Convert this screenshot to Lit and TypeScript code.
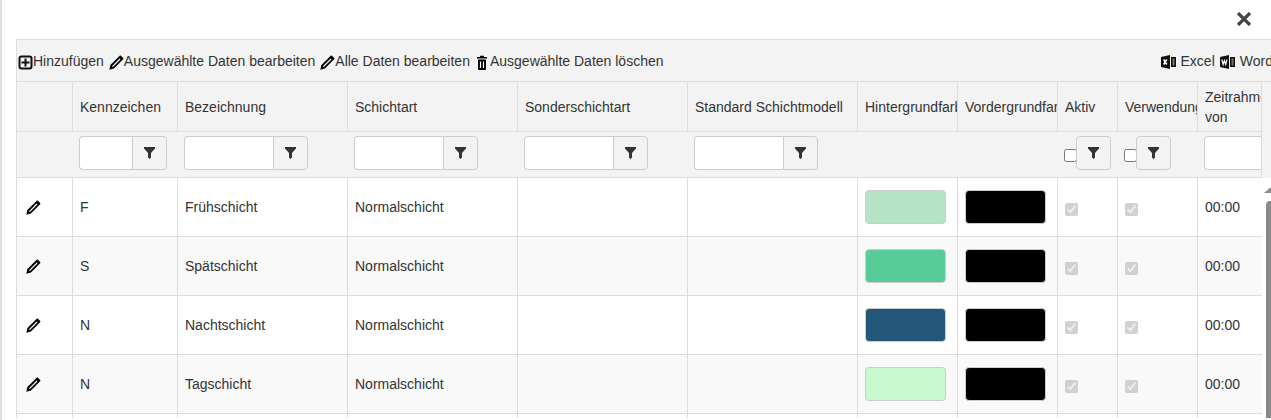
import { LitElement, css, html, svg } from "lit";
import { customElement } from "lit/decorators.js";

const columns = [56, 105, 170, 170, 170, 170, 100, 100, 60, 80, 140, 65];

const shifts = [
  { code: "F", name: "Frühschicht", bg: "#b7e4c7" },
  { code: "S", name: "Spätschicht", bg: "#57cc99" },
  { code: "N", name: "Nachtschicht", bg: "#22577a" },
  { code: "N", name: "Tagschicht", bg: "#c7f9cc" },
  { code: "", name: "", bg: "" },
];

const pencilPath = svg`<path d="M.3 13.7l1-4.300L10 .8c.3-.3.8-.3 1.100 0l2.100 2.100c.3.3.3.8 0 1.100L4.600 12.700z" fill="#000"/><path d="M3.200 10.800L10.300 3.700" stroke="#fff" stroke-width="1.100"/>`;

const icons = {
  plus: html`<svg class="ic" width="15" height="15" viewBox="0 0 15 15"><rect x="1.500" y="1.500" width="12" height="12" rx="2" fill="none" stroke="#111" stroke-width="2"/><path d="M7.500 3.500v8M3.500 7.500h8" stroke="#111" stroke-width="2"/></svg>`,
  pencil: html`<svg class="ic" width="15" height="15" viewBox="0 0 14 14">${pencilPath}</svg>`,
  trash: html`<svg class="ic" width="15" height="15" viewBox="0 0 15 15"><path d="M2 2h10v1.500H2zM5 .8h4V2H5z" fill="#000"/><path d="M3 4.500h8V14a1 1 0 0 1-1 1H4a1 1 0 0 1-1-1z" fill="#000"/><path d="M5.500 6.500v6.500M8.500 6.500v6.500" stroke="#fff" stroke-width="1.200"/></svg>`,
  excel: html`<svg class="ic" width="15" height="14" viewBox="0 0 15 14"><path d="M0 2l9-2v14l-9-2z" fill="#111"/><path d="M10 2h5v10h-5z" fill="#111"/><path d="M11.500 3.500h2v7h-2z" fill="#777"/><path d="M2.600 4.500l3.200 5M5.800 4.500l-3.200 5" stroke="#fff" stroke-width="1.500"/></svg>`,
  word: html`<svg class="ic" width="15" height="14" viewBox="0 0 15 14"><path d="M0 2l9-2v14l-9-2z" fill="#111"/><path d="M10 2h5v10h-5z" fill="#111"/><path d="M11.500 3.500h2v7h-2z" fill="#777"/><path d="M1.800 4.500l1.300 5 1.300-3.800 1.300 3.800 1.300-5" fill="none" stroke="#fff" stroke-width="1.200"/></svg>`,
  funnel: html`<svg width="11" height="12" viewBox="0 0 11 12"><path d="M0 0h11v1.500L7 6v4.500L5.500 12 4 10.500V6L0 1.500z" fill="#333"/></svg>`,
};

@customElement("app-root")
export class AppRoot extends LitElement {
  private filterBox(w: number) {
    return html`<div class="filter" style="width:${w}px">
      <input type="text" />
      <span class="fbtn">${icons.funnel}</span>
    </div>`;
  }

  private checkFilter() {
    return html`<div class="chkfilter">
      <input type="checkbox" />
      <span class="fbtn alone">${icons.funnel}</span>
    </div>`;
  }

  private colgroup() {
    return html`<colgroup>
      ${columns.map((w) => html`<col style="width:${w}px" />`)}
    </colgroup>`;
  }

  private row(s: { code: string; name: string; bg: string }) {
    if (!s.name) {
      return html`<tr>${columns.map(() => html`<td></td>`)}</tr>`;
    }
    return html`<tr>
      <td class="edit"><svg width="15" height="15" viewBox="0 0 14 14">${pencilPath}</svg></td>
      <td>${s.code}</td>
      <td>${s.name}</td>
      <td>Normalschicht</td>
      <td></td>
      <td></td>
      <td class="sw"><div class="swatch" style="background:${s.bg}"></div></td>
      <td class="sw"><div class="swatch black"></div></td>
      <td class="chk"><input type="checkbox" checked disabled /></td>
      <td class="chk"><input type="checkbox" checked disabled /></td>
      <td>00:00</td>
      <td></td>
    </tr>`;
  }

  render() {
    return html`<div class="modal">
      <div class="head">
        <svg width="16" height="14" viewBox="0 0 16 14"><path d="M2 1l12 12M14 1L2 13" stroke="#444" stroke-width="3.200"/></svg>
      </div>
      <div class="grid">
        <div class="toolbar">
          <a>${icons.plus}Hinzufügen</a>
          <a>${icons.pencil}Ausgewählte Daten bearbeiten</a>
          <a>${icons.pencil}Alle Daten bearbeiten</a>
          <a>${icons.trash}Ausgewählte Daten löschen</a>
          <span class="spacer"></span>
          <a class="exp">${icons.excel}Excel</a>
          <a class="exp">${icons.word}Word</a>
        </div>
        <div class="head-outer">
          <div class="head-wrap">
            <table>
              ${this.colgroup()}
              <tr class="titles">
                <th></th>
                <th><div>Kennzeichen</div></th>
                <th><div>Bezeichnung</div></th>
                <th><div>Schichtart</div></th>
                <th><div>Sonderschichtart</div></th>
                <th><div>Standard Schichtmodell</div></th>
                <th><div>Hintergrundfarbe</div></th>
                <th><div>Vordergrundfarbe</div></th>
                <th><div>Aktiv</div></th>
                <th><div>Verwendung</div></th>
                <th class="wrap"><div>Zeitrahmen<br />von</div></th>
                <th></th>
              </tr>
              <tr class="filters">
                <td></td>
                <td>${this.filterBox(88)}</td>
                <td>${this.filterBox(124)}</td>
                <td>${this.filterBox(124)}</td>
                <td>${this.filterBox(124)}</td>
                <td>${this.filterBox(124)}</td>
                <td></td>
                <td></td>
                <td>${this.checkFilter()}</td>
                <td>${this.checkFilter()}</td>
                <td>${this.filterBox(124)}</td>
                <td></td>
              </tr>
            </table>
          </div>
        </div>
        <div class="body-wrap">
          <div class="rows">
            <table>
              ${this.colgroup()}
              ${shifts.map((s) => this.row(s))}
            </table>
          </div>
          <div class="scroll">
            <svg class="arrow" width="8" height="6" viewBox="0 0 8 6"><path d="M8 0v6H1z" fill="#8a8a8a"/></svg>
            <div class="thumb"></div>
          </div>
        </div>
      </div>
    </div>`;
  }

  static styles = css`
    :host {
      display: block;
      height: 420px;
      overflow: hidden;
      background: #fff;
      font-family: "Liberation Sans", Arial, sans-serif;
      font-size: 14px;
      color: #333;
    }
    .modal {
      height: 420px;
      box-sizing: border-box;
      border-left: 2px solid #e0e0e0;
      padding-left: 14px;
      overflow: hidden;
    }
    .head {
      height: 39px;
      box-sizing: border-box;
      display: flex;
      justify-content: flex-end;
      padding: 12px 19px 0 0;
    }
    .grid {
      border-top: 1px solid #ddd;
      border-left: 1px solid #ddd;
    }
    .toolbar {
      height: 41px;
      width: 1290px;
      box-sizing: border-box;
      background: #f3f3f3;
      display: flex;
      align-items: center;
      gap: 5px;
      padding: 1px 0 0 1px;
      white-space: nowrap;
      line-height: 20px;
    }
    .toolbar a {
      display: flex;
      align-items: center;
    }
    .ic {
      flex: none;
      margin-top: 2px;
    }
    .spacer {
      width: 487px;
    }
    .exp {
      gap: 5px;
    }
    .head-outer {
      background: #f3f3f3;
      border-top: 1px solid #ddd;
    }
    .head-wrap {
      width: 1244px;
      overflow: hidden;
      border-right: 1px solid #ddd;
    }
    .rows {
      width: 1245px;
      overflow: hidden;
      flex: none;
    }
    table {
      table-layout: fixed;
      border-collapse: separate;
      border-spacing: 0;
      width: 1386px;
    }
    th {
      height: 49px;
      box-sizing: content-box;
      padding: 0;
      font-weight: normal;
      text-align: left;
      border-right: 1px solid #ddd;
      border-bottom: 1px solid #ddd;
    }
    th div {
      padding-left: 7px;
      white-space: nowrap;
      overflow: hidden;
      line-height: 20px;
    }
    .filter {
      display: flex;
      height: 34px;
    }
    .filter input {
      flex: 1;
      min-width: 0;
      box-sizing: border-box;
      height: 34px;
      margin: 0;
      padding: 0;
      background: #fff;
      border: 1px solid #ccc;
      border-right: 0;
      border-radius: 4px 0 0 4px;
      outline: 0;
    }
    .fbtn {
      flex: none;
      width: 35px;
      height: 34px;
      box-sizing: border-box;
      display: flex;
      align-items: center;
      justify-content: center;
      border: 1px solid #ccc;
      border-radius: 0 4px 4px 0;
      background: #f3f3f3;
    }
    .fbtn.alone {
      border-radius: 4px;
      margin-left: -1px;
    }
    .chkfilter {
      display: flex;
      align-items: center;
      height: 34px;
    }
    .chkfilter input {
      margin: 5px 0 0 0;
      width: 13px;
      height: 13px;
    }
    .body-wrap {
      display: flex;
      height: 240px;
    }
    td {
      padding: 0 0 0 7px;
      height: 58px;
      box-sizing: content-box;
      border-right: 1px solid #ddd;
      border-bottom: 1px solid #ddd;
      background: #fff;
    }
    .filters td {
      height: 41px;
      padding: 4px 0 0 6px;
      vertical-align: top;
      background: transparent;
      border-right: 0;
      overflow: hidden;
    }
    .rows tr:nth-child(even of tr) td {
      background: #f9f9f9;
    }
    .edit {
      padding: 0 0 0 9px;
    }
    .edit svg {
      display: block;
    }
    .swatch {
      width: 81px;
      height: 34px;
      box-sizing: border-box;
      border: 1px solid #ccc;
      border-radius: 4px;
    }
    .swatch.black {
      background: #000;
    }
    .chk input {
      display: block;
      margin: 5px 0 0 0;
      width: 13px;
      height: 13px;
    }
    .scroll {
      flex: none;
      width: 9px;
      overflow: hidden;
      display: flex;
      flex-direction: column;
      align-items: flex-end;
      padding-top: 9px;
      box-sizing: border-box;
    }
    .arrow {
      display: block;
      flex: none;
    }
    .thumb {
      flex: none;
      width: 5px;
      height: 220px;
      margin-top: 8px;
      background: #8a8a8a;
      border-radius: 4px 0 0 0;
    }
  `;
}
